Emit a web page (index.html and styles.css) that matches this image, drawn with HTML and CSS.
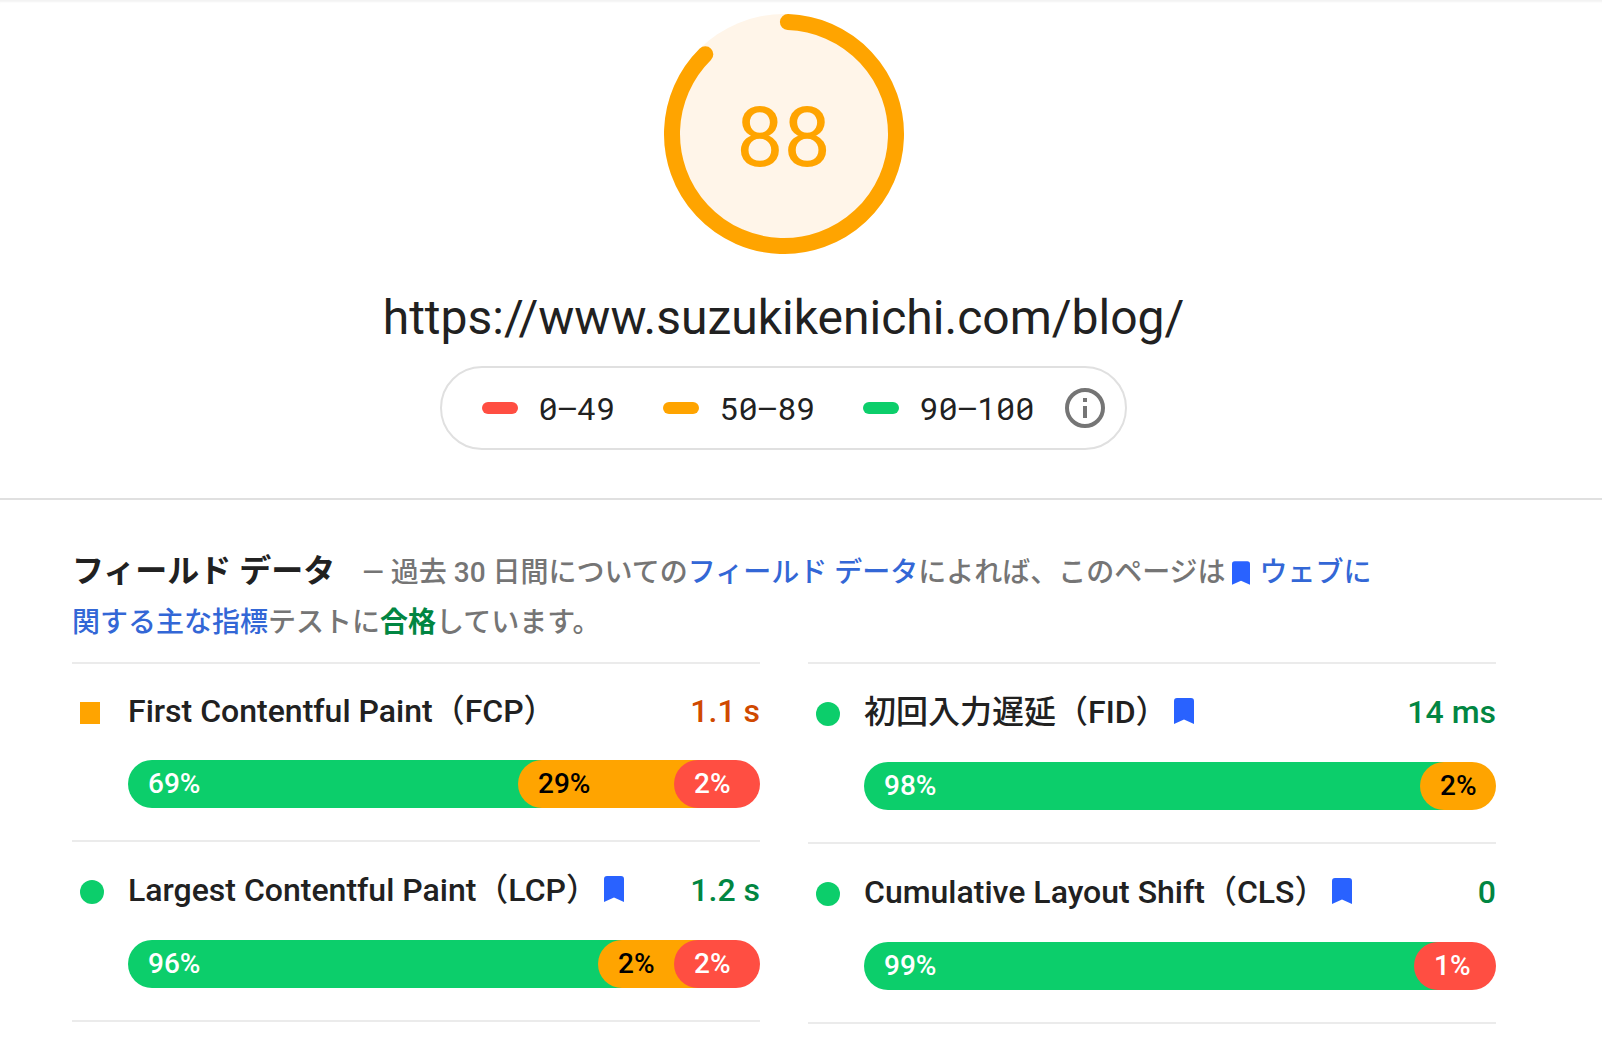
FILE: index.html
```html
<!DOCTYPE html>
<html lang="ja">
<head>
<meta charset="utf-8">
<meta name="viewport" content="width=device-width, initial-scale=1">
<title>PageSpeed Insights</title>
<link rel="stylesheet" href="styles.css">
</head>
<body>
<svg class="defs" aria-hidden="true">
  <symbol id="bookmark" viewBox="0 0 20 26"><path d="M0 26V3Q0 0 3 0H17Q20 0 20 3V26L10 21.500Z"/></symbol>
</svg>
<header class="summary">
  <div class="gauge">
    <svg class="gauge-ring" viewBox="0 0 240 240" aria-hidden="true">
      <circle class="gauge-base" cx="120" cy="120" r="120"/>
      <circle class="gauge-arc" cx="120" cy="120" r="112" transform="rotate(-88 120 120)"/>
    </svg>
    <span class="gauge-score">88</span>
  </div>
  <h1 class="url">https://www.suzukikenichi.com/blog/</h1>
  <div class="legend">
    <ul class="legend-list">
      <li class="legend-item"><span class="swatch poor"></span>0–49</li>
      <li class="legend-item"><span class="swatch average"></span>50–89</li>
      <li class="legend-item"><span class="swatch good"></span>90–100</li>
    </ul>
    <button class="info" type="button" aria-label="情報">
      <svg viewBox="0 0 40 40" width="40" height="40" aria-hidden="true"><circle cx="20" cy="20" r="18" fill="none" stroke="currentColor" stroke-width="4"/><path fill="currentColor" d="M18 10h4v4h-4zM18 18h4v12h-4z"/></svg>
    </button>
  </div>
</header>
<main class="field">
  <div class="intro">
    <h2 class="title">フィールド データ</h2>
    <span class="lead">— 過去 30 日間についての<a href="#field">フィールド データ</a>によれば、このページは<svg class="mark mark-inline" aria-hidden="true"><use href="#bookmark"/></svg><a href="#vitals">ウェブに関する主な指標</a>テストに<strong class="pass">合格</strong>しています。</span>
  </div>
  <div class="metrics" id="field">
    <div class="column">
      <section class="metric">
        <div class="head">
          <span class="status square"></span>
          <h3 class="name">First Contentful Paint（FCP）</h3>
          <span class="value warn">1.1 s</span>
        </div>
        <div class="bar">
          <span class="segment good">69%</span>
          <span class="segment average" style="width:180px">29%</span>
          <span class="segment poor" style="width:86px">2%</span>
        </div>
      </section>
      <section class="metric">
        <div class="head">
          <span class="status"></span>
          <h3 class="name">Largest Contentful Paint（LCP）</h3>
          <svg class="mark" aria-hidden="true"><use href="#bookmark"/></svg>
          <span class="value">1.2 s</span>
        </div>
        <div class="bar">
          <span class="segment good">96%</span>
          <span class="segment average" style="width:100px">2%</span>
          <span class="segment poor" style="width:86px">2%</span>
        </div>
      </section>
    </div>
    <div class="column">
      <section class="metric">
        <div class="head">
          <span class="status"></span>
          <h3 class="name">初回入力遅延（FID）</h3>
          <svg class="mark" aria-hidden="true"><use href="#bookmark"/></svg>
          <span class="value">14 ms</span>
        </div>
        <div class="bar">
          <span class="segment good">98%</span>
          <span class="segment average" style="width:76px">2%</span>
        </div>
      </section>
      <section class="metric">
        <div class="head">
          <span class="status"></span>
          <h3 class="name">Cumulative Layout Shift（CLS）</h3>
          <svg class="mark" aria-hidden="true"><use href="#bookmark"/></svg>
          <span class="value">0</span>
        </div>
        <div class="bar">
          <span class="segment good">99%</span>
          <span class="segment poor" style="width:82px">1%</span>
        </div>
      </section>
    </div>
  </div>
</main>
</body>
</html>
```
FILE: styles.css
```css
* { box-sizing: border-box; }

body {
  margin: 0;
  background: #fff;
  color: #212121;
  font-family: Roboto, "Noto Sans CJK JP", sans-serif;
}

h1, h2, h3, ul { margin: 0; padding: 0; }
.defs { display: none; }

.summary {
  display: flex;
  flex-direction: column;
  align-items: center;
  padding: 14px 35px 48px 0;
  border-bottom: 2px solid #e0e0e0;
  box-shadow: inset 0 3px 2px -1px #f3f3f3;
}

.gauge { display: grid; place-items: center; }
.gauge > * { grid-area: 1 / 1; }
.gauge-ring { display: block; width: 240px; height: 240px; }
.gauge-base { fill: #fff5e9; }
.gauge-arc {
  fill: none;
  stroke: #ffa400;
  stroke-width: 16;
  stroke-linecap: round;
  stroke-dasharray: 612 704;
}
.gauge-score { padding-top: 8px; color: #ffa400; font-size: 84px; line-height: 84px; }

.url {
  margin: 32px 0 16px;
  font-size: 48px;
  font-weight: 400;
  line-height: 64px;
}

.legend {
  display: flex;
  align-items: center;
  gap: 30px;
  height: 84px;
  padding: 0 20px 0 40px;
  border: 2px solid #e0e0e0;
  border-radius: 42px;
}
.legend-list { display: flex; gap: 48px; list-style: none; }
.legend-item {
  display: flex;
  align-items: center;
  gap: 20px;
  font: 32px/40px "Roboto Mono", "Liberation Mono", monospace;
}
.swatch { width: 36px; height: 12px; border-radius: 6px; }
.info {
  padding: 0;
  border: 0;
  background: none;
  color: #757575;
}
.info svg { display: block; }

.good { background: #0cce6b; color: #fff; }
.average { background: #ffa400; color: #000; }
.poor { background: #ff4e42; color: #fff; }

.field { padding: 46px 106px 0 72px; }
.intro {
  max-width: 1320px;
  margin-bottom: 14px;
  color: #757575;
  font-size: 28px;
  font-weight: 500;
  line-height: 50px;
}
.title {
  display: inline;
  margin-right: 20px;
  color: #212121;
  font-size: 32px;
  font-weight: 700;
}
.intro a { color: #3367d6; text-decoration: none; }
.pass { color: #018642; font-weight: 700; }

.mark { flex: none; width: 20px; height: 26px; fill: #2962ff; }
.mark-inline { width: 18px; height: 24px; margin: 0 10px 0 6px; vertical-align: -3px; }

.metrics {
  display: grid;
  grid-template-columns: 1fr 1fr;
  gap: 48px;
}
.column { border-bottom: 2px solid #ebebeb; align-self: start; }
.metric { padding: 24px 0 32px; border-top: 2px solid #ebebeb; }
.head {
  display: flex;
  align-items: center;
  margin-bottom: 26px;
  font-size: 32px;
  line-height: 46px;
}
.status {
  flex: none;
  width: 24px;
  height: 24px;
  margin: 4px 24px 0 8px;
  border-radius: 50%;
  background: #0cce6b;
}
.square {
  width: 20px;
  height: 22px;
  margin-right: 28px;
  border-radius: 0;
  background: #ffa400;
}
.name { font-size: 32px; font-weight: 500; white-space: nowrap; }
.head .mark { margin: 10px 0 12px 6px; }
.value { margin-left: auto; color: #018642; font-weight: 500; }
.warn { color: #d04900; }

.bar { display: flex; margin-left: 56px; }
.segment {
  flex: none;
  height: 48px;
  padding-left: 20px;
  border-radius: 24px;
  font-size: 28px;
  font-weight: 500;
  line-height: 48px;
}
.segment:first-child { flex: 1; }
/* each segment runs under the round end of the next one */
.segment:not(:last-child) { margin-right: -24px; border-radius: 24px 0 0 24px; }
```
